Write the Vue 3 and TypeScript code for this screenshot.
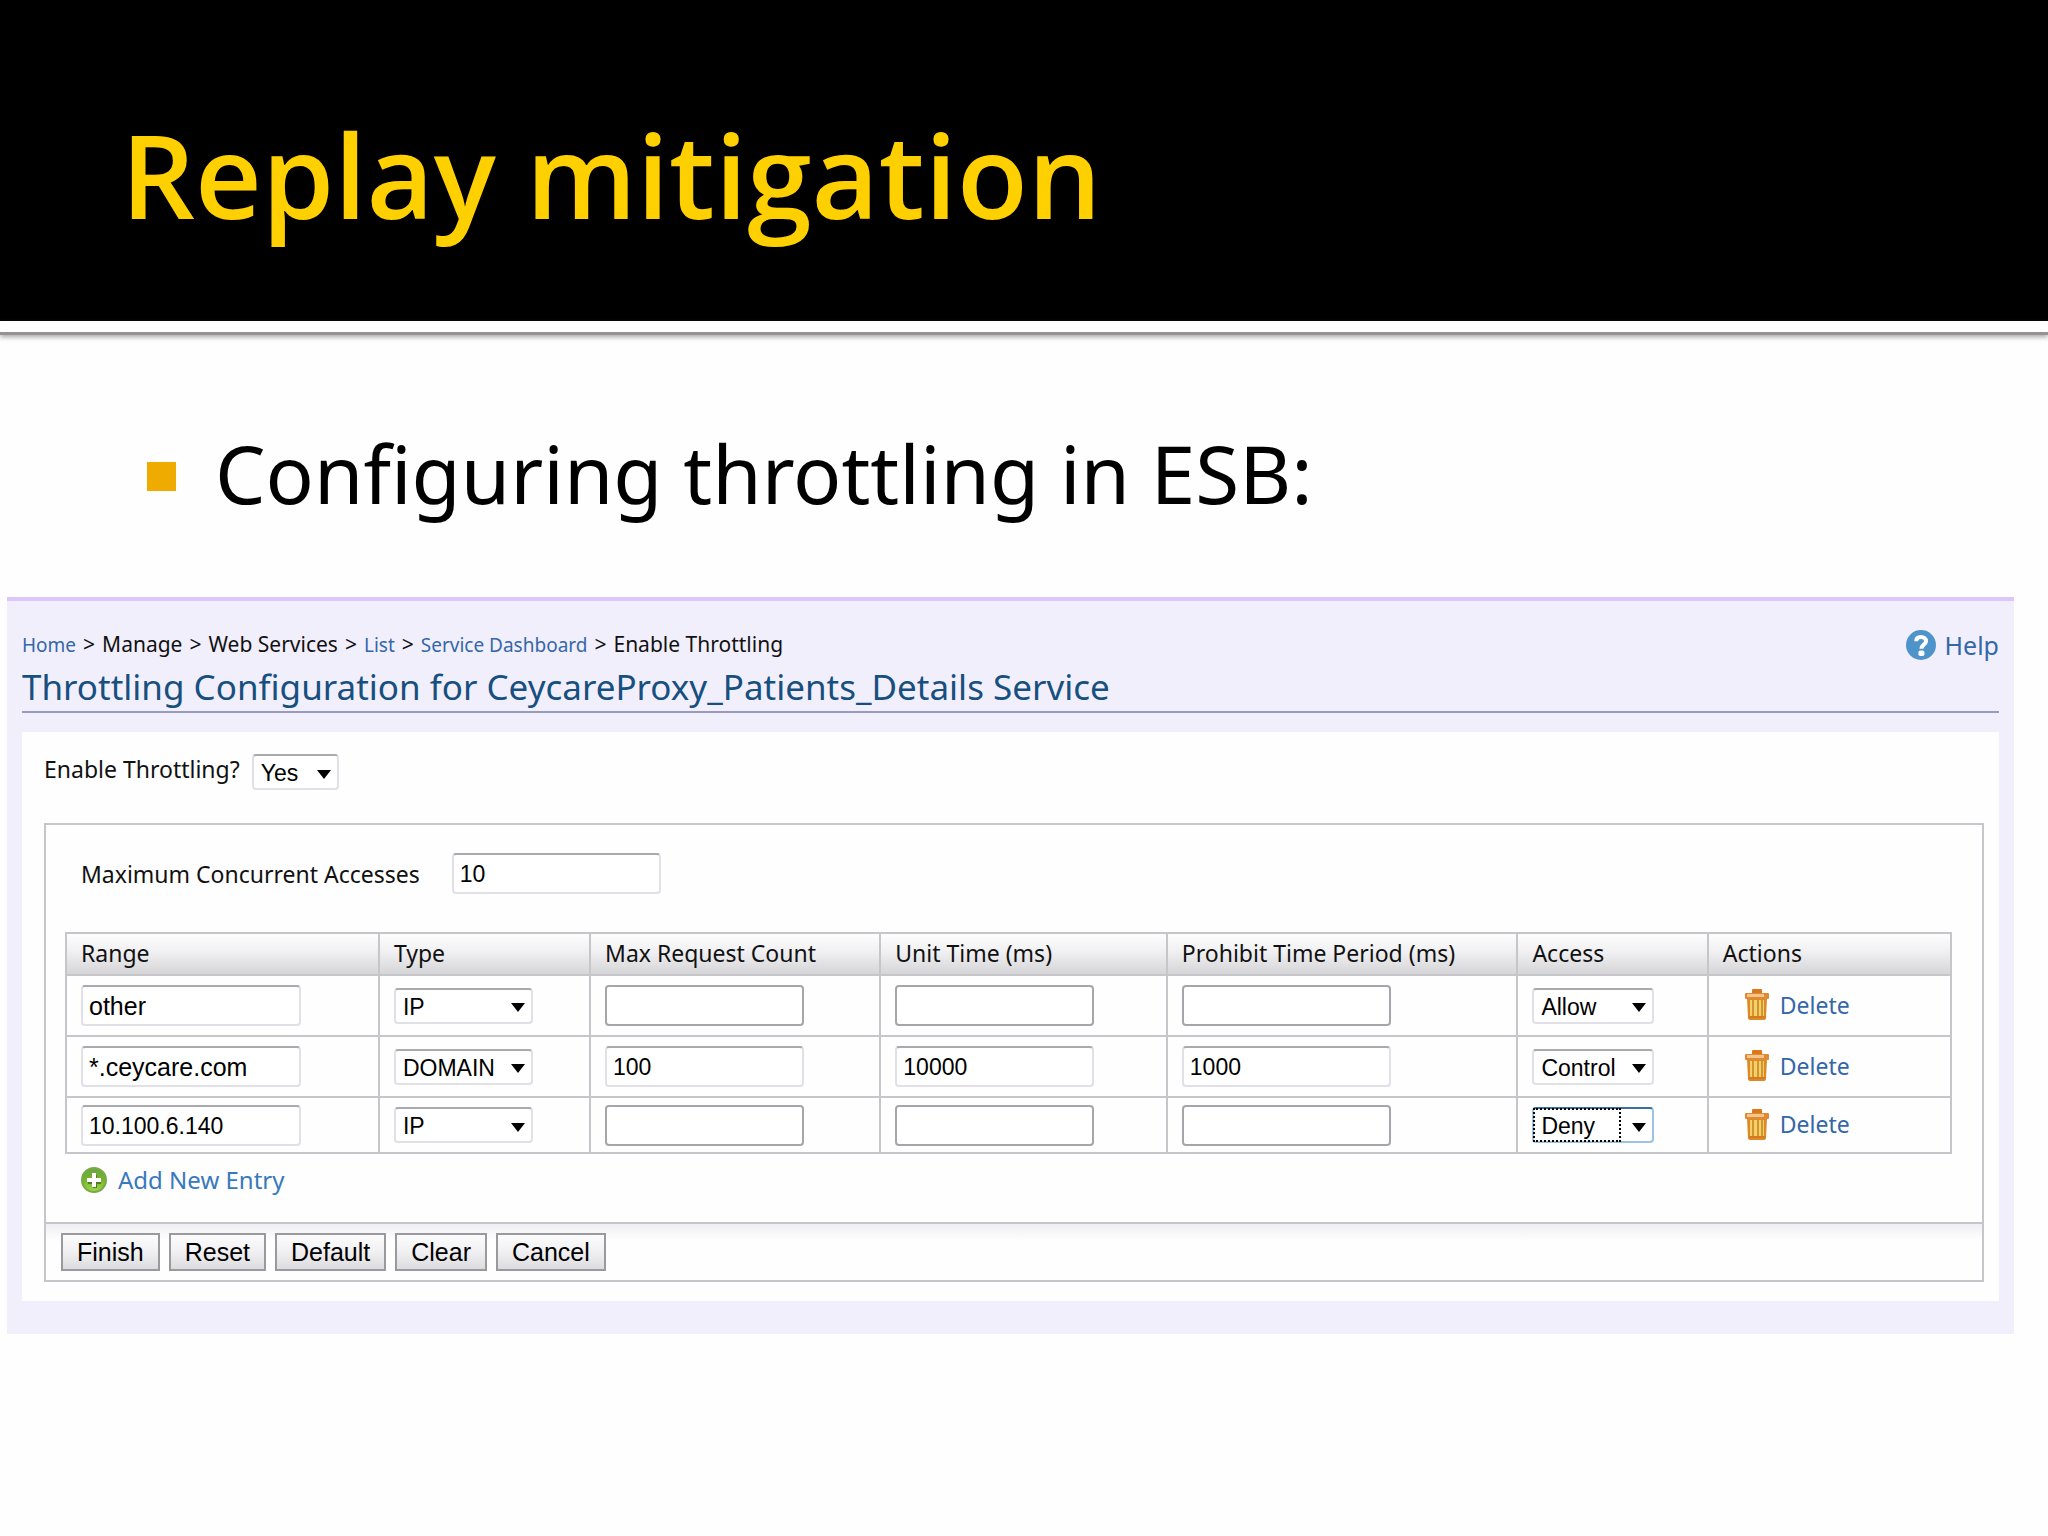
<script setup lang="ts">
import { ref } from 'vue'

interface Entry {
  range: string
  numericRange: boolean
  type: string
  maxCount: string
  unitTime: string
  prohibit: string
  access: string
  focused: boolean
}

const crumbs = [
  { text: 'Home', link: true },
  { text: 'Manage', link: false },
  { text: 'Web Services', link: false },
  { text: 'List', link: true },
  { text: 'Service Dashboard', link: true },
  { text: 'Enable Throttling', link: false },
]

const columns = ['Range', 'Type', 'Max Request Count', 'Unit Time (ms)', 'Prohibit Time Period (ms)', 'Access', 'Actions']
const actions = ['Finish', 'Reset', 'Default', 'Clear', 'Cancel']
const types = ['IP', 'DOMAIN']
const accessLevels = ['Allow', 'Deny', 'Control']

const enabled = ref('Yes')
const maxAccesses = ref('10')
const entries = ref<Entry[]>([
  { range: 'other', numericRange: false, type: 'IP', maxCount: '', unitTime: '', prohibit: '', access: 'Allow', focused: false },
  { range: '*.ceycare.com', numericRange: false, type: 'DOMAIN', maxCount: '100', unitTime: '10000', prohibit: '1000', access: 'Control', focused: false },
  { range: '10.100.6.140', numericRange: true, type: 'IP', maxCount: '', unitTime: '', prohibit: '', access: 'Deny', focused: true },
])
</script>

<template>
  <div class="slide">
    <header class="banner">
      <h1>Replay mitigation</h1>
    </header>
    <div class="rule"></div>

    <ul class="points">
      <li>Configuring throttling in ESB:</li>
    </ul>

    <main class="console">
      <div class="top-row">
        <nav class="crumbs" aria-label="Breadcrumb">
          <template v-for="(c, i) in crumbs" :key="c.text">
            <span v-if="i > 0" class="sep">&gt;</span>
            <a v-if="c.link" href="#">{{ c.text }}</a>
            <span v-else>{{ c.text }}</span>
          </template>
        </nav>
        <a class="help" href="#">
          <svg width="30" height="30" viewBox="0 0 30 30" aria-hidden="true">
            <circle cx="15" cy="15" r="15" fill="#4f93cb" />
            <path d="M10.2 11.2C10.2 8.4 12.2 7 15 7S20 8.7 20 11.2C20 14.6 15.4 14.6 15.4 18.8" fill="none" stroke="#fff" stroke-width="4" />
            <rect x="12.4" y="20.6" width="6" height="5.4" rx="1.8" fill="#fff" />
          </svg>
          <span>Help</span>
        </a>
      </div>
      <h2>Throttling Configuration for CeycareProxy_Patients_Details Service</h2>

      <div class="sheet">
        <div class="enable">
          <label for="enable">Enable Throttling?</label>
          <span class="drop drop-yes">
            <select id="enable" v-model="enabled">
              <option>Yes</option>
              <option>No</option>
            </select>
            <svg class="caret" width="14" height="9" viewBox="0 0 14 9" aria-hidden="true"><path d="M0 0H14L7 9Z" /></svg>
          </span>
        </div>

        <form class="frame" @submit.prevent>
          <div class="frame-body">
            <div class="accesses">
              <label for="accesses">Maximum Concurrent Accesses</label>
              <input id="accesses" v-model="maxAccesses" class="box filled num w-prohibit" type="text" />
            </div>

            <table>
              <colgroup>
                <col class="c-range" /><col class="c-type" /><col class="c-count" /><col class="c-unit" />
                <col class="c-prohibit" /><col class="c-access" /><col class="c-actions" />
              </colgroup>
              <thead>
                <tr>
                  <th v-for="col in columns" :key="col" scope="col">{{ col }}</th>
                </tr>
              </thead>
              <tbody>
                <tr v-for="(e, i) in entries" :key="i">
                  <td><input v-model="e.range" class="box filled w-range" :class="{ num: e.numericRange }" type="text" aria-label="Range" /></td>
                  <td>
                    <span class="drop drop-type">
                      <select v-model="e.type" aria-label="Type">
                        <option v-for="t in types" :key="t">{{ t }}</option>
                      </select>
                      <svg class="caret" width="14" height="9" viewBox="0 0 14 9" aria-hidden="true"><path d="M0 0H14L7 9Z" /></svg>
                    </span>
                  </td>
                  <td><input v-model="e.maxCount" class="box num w-count" :class="{ filled: e.maxCount }" type="text" aria-label="Max Request Count" /></td>
                  <td><input v-model="e.unitTime" class="box num w-count" :class="{ filled: e.unitTime }" type="text" aria-label="Unit Time (ms)" /></td>
                  <td><input v-model="e.prohibit" class="box num w-prohibit" :class="{ filled: e.prohibit }" type="text" aria-label="Prohibit Time Period (ms)" /></td>
                  <td>
                    <span class="drop drop-access" :class="{ focused: e.focused }">
                      <select v-model="e.access" aria-label="Access">
                        <option v-for="a in accessLevels" :key="a">{{ a }}</option>
                      </select>
                      <svg class="caret" width="14" height="9" viewBox="0 0 14 9" aria-hidden="true"><path d="M0 0H14L7 9Z" /></svg>
                    </span>
                  </td>
                  <td>
                    <a class="delete" href="#">
                      <svg width="24" height="31" viewBox="0 0 24 31" aria-hidden="true">
                        <rect x="7" y="0" width="10" height="6" rx="1" fill="#d9791c" />
                        <path d="M2 9H22L21 29Q21 31 18 31H6Q3 31 3 29Z" fill="#dd8a26" />
                        <path d="M5 11H7V27H5ZM9 11H12V28H9ZM14 11H16V28H14ZM18 11H19V27H18Z" fill="#f7cf6a" />
                        <path d="M7 11H9V27H7ZM12 11H14V28H12ZM16 11H18V27H16Z" fill="#cf962f" />
                        <rect x="4" y="27" width="16" height="2" fill="#d57a20" />
                        <rect x="0" y="4" width="24" height="6" rx="1" fill="#e08a35" />
                        <rect x="2" y="5" width="17" height="3" fill="#f7c48c" />
                      </svg>
                      <span>Delete</span>
                    </a>
                  </td>
                </tr>
              </tbody>
            </table>

            <a class="add" href="#">
              <svg width="26" height="26" viewBox="0 0 26 26" aria-hidden="true">
                <defs>
                  <linearGradient id="plusFill" x1="0" y1="0" x2="0" y2="1">
                    <stop offset="0" stop-color="#6fa343" />
                    <stop offset="0.5" stop-color="#74b52c" />
                    <stop offset="1" stop-color="#a3d84a" />
                  </linearGradient>
                </defs>
                <circle cx="13" cy="13" r="12" fill="url(#plusFill)" stroke="#75a94a" stroke-width="2" />
                <path d="M12 8H16V12H20V17H16V21H12V17H7V12H12Z" fill="#4d7d2a" />
                <path d="M11 6H15V11H20V15H15V20H11V15H6V11H11Z" fill="#fff" />
              </svg>
              <span>Add New Entry</span>
            </a>
          </div>

          <div class="buttons">
            <button v-for="a in actions" :key="a" type="button">{{ a }}</button>
          </div>
        </form>
      </div>
    </main>
  </div>
</template>

<style>
body {
  background: #fefefe;
}
</style>

<style scoped>
* {
  box-sizing: border-box;
}

.slide {
  font-family: "Noto Sans", "Open Sans", sans-serif;
  font-size: 23px;
  color: #111;
}

a {
  color: #3467a8;
  text-decoration: none;
}

.banner {
  background: #000;
  padding: 94px 121px 67px;
}

h1 {
  margin: 0;
  font-family: "Open Sans", "Noto Sans", sans-serif;
  font-size: 116px;
  font-weight: 600;
  line-height: 160px;
  color: #ffd000;
}

.rule {
  height: 14px;
  background: #fff;
  border-bottom: 3px solid #959195;
  box-shadow: 0 2px 5px rgba(80, 76, 80, 0.5);
}

.points {
  list-style: none;
  margin: 0;
  padding: 78px 140px 64px 147px;
}

.points li {
  display: flex;
  align-items: center;
  gap: 39px;
  font-size: 80px;
  line-height: 120px;
  color: #000;
}

.points li::before {
  content: "";
  width: 29px;
  height: 29px;
  margin-top: 6px;
  background: #f0ab00;
}

.console {
  margin: 0 34px 0 7px;
  padding: 25px 15px 33px;
  background: #f2effd;
  border-top: 4px solid #dcc6fb;
}

.top-row {
  display: flex;
  align-items: center;
  justify-content: space-between;
}

.crumbs {
  display: flex;
  align-items: baseline;
  gap: 7px;
  font-size: 21px;
  line-height: 36px;
}

.crumbs a {
  font-size: 19px;
}

.help {
  display: flex;
  align-items: center;
  gap: 9px;
  font-size: 25px;
  line-height: 36px;
}

h2 {
  margin: 0;
  font-size: 35px;
  font-weight: 400;
  line-height: 48px;
  color: #17507f;
  border-bottom: 2px solid #9a9aba;
}

.sheet {
  margin-top: 19px;
  padding: 22px 15px 19px 22px;
  background: #fefefe;
}

.enable {
  display: flex;
  align-items: center;
  gap: 12px;
  line-height: 30px;
}

.enable label {
  margin-bottom: 6px;
}

.frame {
  margin: 33px 0 0;
  border: 2px solid #c6c5c9;
}

.frame-body {
  padding: 28px 30px 22px 19px;
}

.accesses {
  display: flex;
  align-items: center;
  gap: 32px;
  padding-left: 16px;
  margin-bottom: 38px;
}

.drop {
  display: inline-grid;
  align-items: center;
  vertical-align: middle;
  position: relative;
}

.drop-yes {
  width: 87px;
}

.drop-type {
  width: 139px;
}

.drop-access {
  width: 122px;
}

.drop select {
  grid-area: 1 / 1;
  appearance: none;
  width: 100%;
  height: 36px;
  margin: 0;
  padding: 2px 0 0 7px;
  border: 2px solid #e0e0e6;
  border-top-color: #aaa9ae;
  border-radius: 4px;
  background: #fff;
  color: #000;
  font: 23px/28px "Liberation Sans", Arial, sans-serif;
}

.caret {
  grid-area: 1 / 1;
  justify-self: end;
  margin: 4px 8px 0 0;
  pointer-events: none;
}

.focused select {
  border-color: #9cc4e0;
  border-top-color: #3c6e9e;
}

/* focus ring round the value, left of the arrow */
.focused::after {
  content: "";
  position: absolute;
  inset: 1px 33px 1px 1px;
  border: 2px dotted #000;
  pointer-events: none;
}

.box {
  display: block;
  height: 41px;
  margin: 0;
  padding: 2px 6px 0;
  border: 2px solid #a5a5aa;
  border-radius: 4px;
  background: #fff;
  color: #000;
  font: 25px/32px "Liberation Sans", Arial, sans-serif;
}

.filled {
  border-color: #aaa9ae #e0e0e6 #e0e0e6;
}

.num {
  font-size: 23px;
}

.w-range {
  width: 220px;
}

.w-count {
  width: 199px;
}

.w-prohibit {
  width: 209px;
}

table {
  width: 100%;
  table-layout: fixed;
  border-collapse: collapse;
}

.c-range {
  width: 16.6%;
}

.c-type {
  width: 11.2%;
}

.c-count {
  width: 15.4%;
}

.c-unit {
  width: 15.2%;
}

.c-prohibit {
  width: 18.6%;
}

.c-access {
  width: 10.1%;
}

.c-actions {
  width: 12.9%;
}

th,
td {
  border: 2px solid #c6c5c9;
  padding: 0 0 0 14px;
  text-align: left;
  white-space: nowrap;
}

th {
  height: 42px;
  font-weight: 400;
  line-height: 34px;
  padding-bottom: 2px;
  border-bottom: 0;
  background: linear-gradient(#fdfdfd, #f0f0f2 45%, #d5d5d7);
}

td {
  height: 61px;
}

tr:last-child td {
  height: 56px;
}

.delete {
  display: flex;
  align-items: center;
  gap: 11px;
  padding: 0 0 2px 22px;
}

.add {
  display: inline-flex;
  align-items: center;
  gap: 11px;
  margin: 9px 0 0 16px;
  font-size: 24px;
  line-height: 34px;
  color: #3879bd;
}

.buttons {
  display: flex;
  gap: 9px;
  padding: 9px 15px;
  border-top: 2px solid #c6c5c9;
  background: linear-gradient(#efeef2, #fefefe 16px);
}

button {
  height: 38px;
  padding: 0 14px;
  border: 2px solid #9a9a9e;
  border-radius: 0;
  background: linear-gradient(#fcfcfc, #f0f0f2 50%, #dcdcde);
  color: #000;
  font: 25px/32px "Liberation Sans", Arial, sans-serif;
}
</style>
